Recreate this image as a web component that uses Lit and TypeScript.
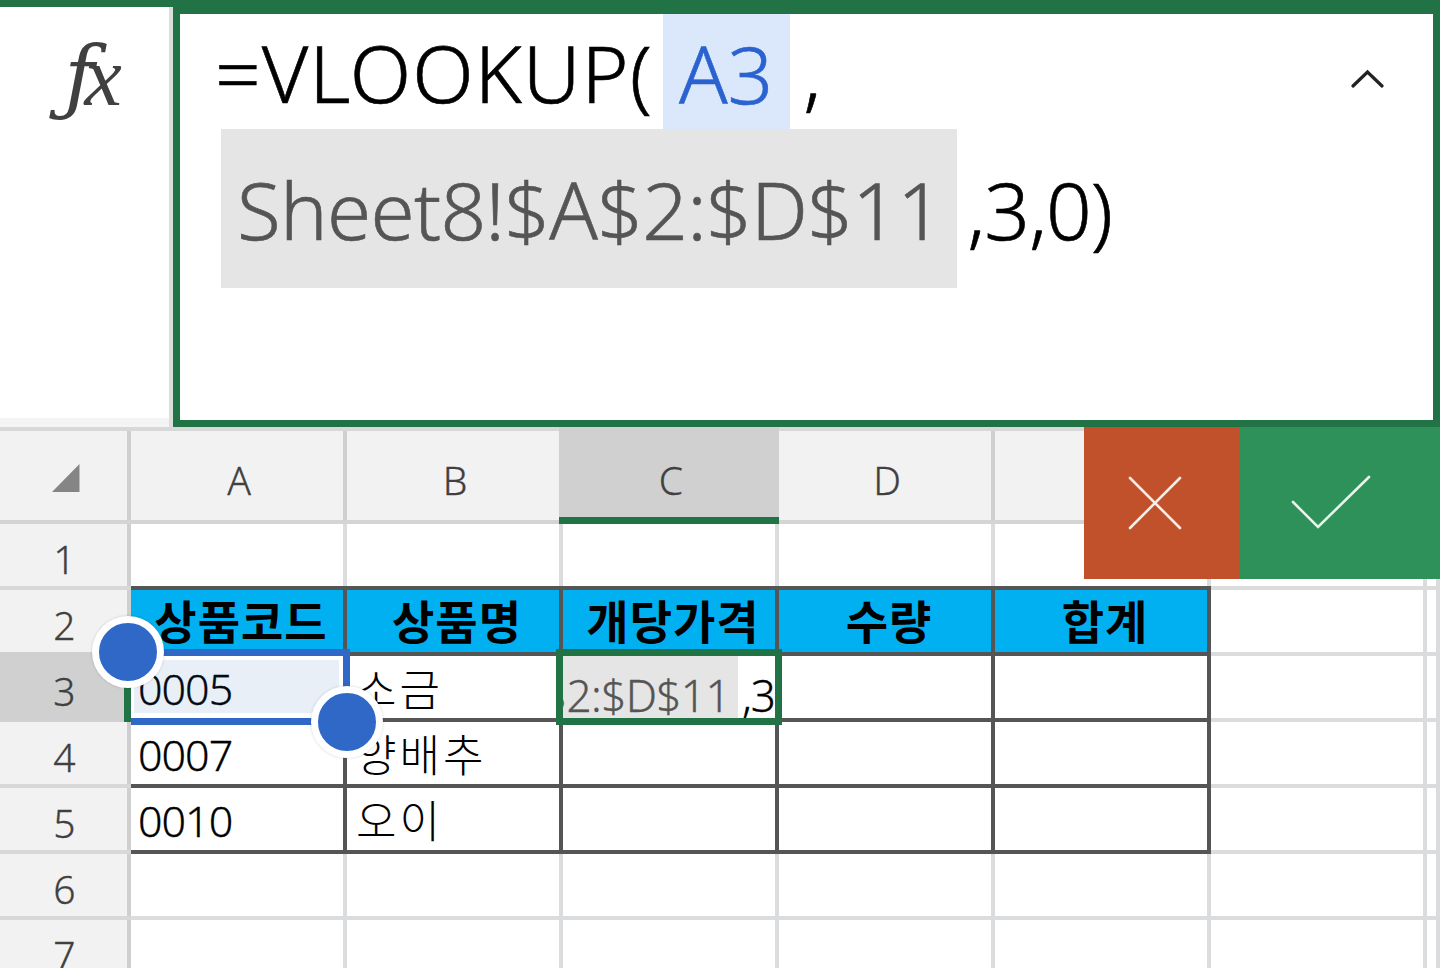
import { LitElement, html, css, nothing } from "lit";
import { customElement } from "lit/decorators.js";

const COLS = ["A", "B", "C", "D", "E", "F", ""];
const HEAD = ["상품코드", "상품명", "개당가격", "수량", "합계"];
const BODY: Record<number, [string, string]> = {
  3: ["0005", "소금"],
  4: ["0007", "양배추"],
  5: ["0010", "오이"],
};

@customElement("app-root")
export class AppRoot extends LitElement {
  static styles = css`
    :host {
      display: block;
      width: 1440px;
      height: 968px;
      overflow: hidden;
      background: #fff;
      font-family: "Noto Sans", "Noto Sans CJK KR", sans-serif;
      font-weight: 300;
    }
    .bar { display: flex; height: 427px; }
    .fx-panel {
      width: 173px;
      box-sizing: border-box;
      border-top: 7px solid #217346;
      display: flex;
      flex-direction: column;
      background: #d9dfdb;
    }
    .fx-face {
      width: 169px;
      flex: 1;
      background: #fff;
      border-bottom: 9px solid #f4f4f4;
      box-sizing: border-box;
      display: flex;
      justify-content: center;
    }
    .fx {
      color: #404040;
      margin: 28px 0 0 17px;
      font: italic 400 84px/1 "Liberation Serif", serif;
    }
    .fx-f {
      font: italic 400 82px/1 "DejaVu Serif", serif;
      margin-right: -10px;
    }
    .editor {
      flex: 1;
      box-sizing: border-box;
      border: 7px solid #217346;
      border-top-width: 14px;
      background: #fff;
      position: relative;
      font-size: 80px;
      color: #000;
      -webkit-text-stroke: 0.6px currentColor;
    }
    .line { display: flex; align-items: center; white-space: pre; }
    .l1 { height: 115px; line-height: 117px; padding-left: 35px; letter-spacing: 1px; }
    .l2 { height: 159px; line-height: 159px; padding-left: 41px; }
    .chip-blue {
      height: 115px;
      background: #dbe8fb;
      color: #2a62d0;
      padding: 0 17px 0 16px;
      margin-left: 10px;
      margin-right: 13px;
      letter-spacing: 0;
    }
    .chip-gray {
      background: #e5e5e5;
      color: #555;
      height: 159px;
      padding: 0 15px 0 16px;
      margin-right: 10px;
      letter-spacing: -0.7px;
    }
    .l2 .rest { letter-spacing: -1px; }
    .chev { position: absolute; right: 49px; top: 55px; }

    .sheet {
      position: relative;
      height: 541px;
      overflow: hidden;
      display: grid;
      grid-template-columns: 131px repeat(6, 216px) 13px;
      grid-template-rows: 97px repeat(7, 66px);
    }
    .c {
      --rl: #dbdcdd;
      --bl: #dbdcdd;
      box-shadow: inset 0 -4px 0 var(--bl), inset -4px 0 0 var(--rl);
      display: flex;
      align-items: center;
      box-sizing: border-box;
      padding-top: 0;
      position: relative;
      min-width: 0;
      overflow: hidden;
    }
    .hd {
      --rl: #cfcfcf;
      --bl: #d4d4d4;
      background: #f2f2f2;
      color: #404040;
      font-size: 39px;
      justify-content: center;
      border-top: 4px solid #d8d8d8;
      padding-top: 3px;
      -webkit-text-stroke: 0.3px currentColor;
    }
    .hd.on {
      background: #d0d0d0;
      border-top: none;
      --bl: #217346;
      --rl: #d0d0d0;
      overflow: visible;
      padding-top: 7px;
    }
    .hd.on::before {
      content: "";
      position: absolute;
      left: -4px; top: 0;
      width: 4px; height: 90px;
      background: #d0d0d0;
    }
    .hd.on::after {
      content: "";
      position: absolute;
      left: -4px; right: 0; bottom: 0;
      height: 7px;
      background: #217346;
    }
    .rh {
      --rl: #cfcfcf;
      --bl: #d8d8d8;
      background: #f2f2f2;
      color: #404040;
      font-size: 39px;
      justify-content: center;
      padding-right: 2px;
      padding-top: 2px;
      -webkit-text-stroke: 0.3px currentColor;
    }
    .rh.on {
      background: #d0d0d0;
      --bl: #d0d0d0;
      --rl: #217346;
      overflow: visible;
    }
    .rh.on::before {
      content: "";
      position: absolute;
      left: 0; right: 0; top: -4px;
      height: 4px;
      background: #d0d0d0;
    }
    .corner { justify-content: flex-start; padding-top: 0; }
    .tri { margin: 0 0 0 52px; }
    .dark-b { --bl: #555; }
    .dark-r { --rl: #555; }
    .th {
      background: #00b0f0;
      color: #000;
      font-weight: 700;
      font-size: 46px;
      letter-spacing: 1px;
      justify-content: center;
      padding-left: 4px;
      padding-bottom: 8px;
    }
    .num { font-size: 43px; padding-left: 7px; padding-bottom: 2px; color: #000; letter-spacing: -1px; -webkit-text-stroke: 0.3px currentColor; }
    .kr { font-size: 44px; padding-left: 9px; padding-bottom: 4px; color: #000; letter-spacing: 3px; }

    .range {
      position: absolute;
      left: 131px;
      top: 222px;
      width: 219px;
      height: 76px;
      box-sizing: border-box;
      border: 7px solid #3068c8;
      border-left: none;
      display: flex;
    }
    .range-fill {
      flex: 1;
      margin: 4px 4px 5px 3px;
      background: rgba(35, 95, 175, 0.1);
    }
    .rowmark {
      position: absolute;
      left: 124px;
      top: 225px;
      width: 7px;
      height: 70px;
      background: #217346;
    }
    .handle {
      position: absolute;
      width: 58px;
      height: 58px;
      box-sizing: content-box;
      border: 7px solid #fff;
      border-radius: 50%;
      background: #3068c8;
      box-shadow: 0 0 3px rgba(0, 0, 0, 0.18);
    }
    .h1 { left: 92px; top: 189px; }
    .h2 { left: 311px; top: 259px; }

    .cell-edit {
      position: absolute;
      left: 556px;
      top: 222px;
      width: 226px;
      height: 76px;
      box-sizing: border-box;
      border: 7px solid #217346;
      background: #fff;
      overflow: hidden;
      display: flex;
      justify-content: flex-end;
      align-items: stretch;
      white-space: pre;
      font-size: 44px;
      line-height: 78px;
      -webkit-text-stroke: 0.3px currentColor;
    }
    .cell-gray {
      background: #e5e5e5;
      color: #555;
      padding: 0 8px 0 0;
      letter-spacing: -0.6px;
    }
    .cell-rest { padding: 0 0 0 4px; color: #000; letter-spacing: -1px; }

    .actions {
      position: absolute;
      left: 1084px;
      top: 0;
      right: 0;
      height: 152px;
      display: flex;
    }
    .cancel {
      width: 156px;
      padding-right: 14px;
      box-sizing: border-box;
      background: #c1512a;
      display: flex;
      align-items: center;
      justify-content: center;
    }
    .ok {
      flex: 1;
      padding-right: 18px;
      background: #2e9159;
      display: flex;
      align-items: center;
      justify-content: center;
    }
  `;

  private renderRow(r: number) {
    const on = r === 3;
    const cells = COLS.map((_, i) => {
      const inTable = i < 5;
      if (r === 1) {
        return html`<div class="c ${inTable ? "dark-b" : ""}"></div>`;
      }
      if (r === 2 && inTable) {
        return html`<div class="c th dark-b dark-r">${HEAD[i]}</div>`;
      }
      if (BODY[r] && inTable) {
        const t = i < 2 ? BODY[r][i] : "";
        return html`<div class="c dark-b dark-r ${i === 0 ? "num" : i === 1 ? "kr" : ""}">${t}</div>`;
      }
      return html`<div class="c"></div>`;
    });
    return html`<div class="c rh ${on ? "on" : ""}">${r}</div>${cells}`;
  }

  render() {
    return html`
      <div class="bar">
        <div class="fx-panel">
          <div class="fx-face"><span class="fx"><span class="fx-f">ƒ</span>x</span></div>
        </div>
        <div class="editor">
          <div class="line l1"><span>=VLOOKUP(</span><span class="chip-blue">A3</span><span>,</span></div>
          <div class="line l2"><span class="chip-gray">Sheet8!$A$2:$D$11</span><span class="rest">,3,0)</span></div>
          <svg class="chev" width="33" height="19" viewBox="0 0 33 19" fill="none" stroke="#222" stroke-width="3.2" stroke-linecap="round">
            <path d="M2 17 L16.5 3 L31 17" />
          </svg>
        </div>
      </div>
      <div class="sheet">
        <div class="c hd corner">
          <svg class="tri" width="28" height="28" viewBox="0 0 28 28"><path d="M27.5 0 V28 H0 Z" fill="#858585" /></svg>
        </div>
        ${COLS.map(
          (c, i) => html`<div class="c hd ${i === 2 ? "on" : ""}">${c || nothing}</div>`
        )}
        ${[1, 2, 3, 4, 5, 6, 7].map((r) => this.renderRow(r))}

        <div class="rowmark"></div>
        <div class="range"><div class="range-fill"></div></div>
        <div class="cell-edit">
          <span class="cell-gray">$A$2:$D$11</span><span class="cell-rest">,3</span>
        </div>
        <div class="handle h1"></div>
        <div class="handle h2"></div>
        <div class="actions">
          <div class="cancel">
            <svg width="56" height="56" viewBox="0 0 56 56" fill="none" stroke="#fbeee8" stroke-width="2.6" stroke-linecap="round">
              <path d="M3 3 L53 53 M53 3 L3 53" />
            </svg>
          </div>
          <div class="ok">
            <svg width="82" height="56" viewBox="0 0 82 56" fill="none" stroke="#e6f6ea" stroke-width="2.6" stroke-linecap="round">
              <path d="M3 27 L28 52 L79 2" />
            </svg>
          </div>
        </div>
      </div>
    `;
  }
}
